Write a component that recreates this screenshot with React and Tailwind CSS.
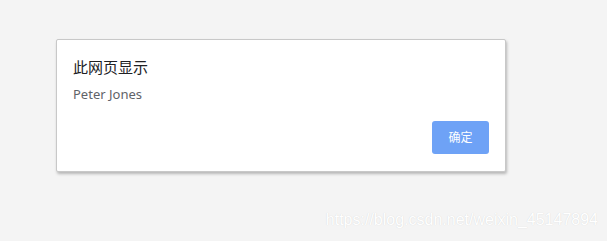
import React from "react";

const App = () => {
  return (
    <div
      className="w-[607px] h-[241px] bg-[#f4f4f4] overflow-hidden flex flex-col"
      style={{ fontFamily: '"Noto Sans", "Noto Sans CJK SC", sans-serif' }}
    >
      <div className="ml-[56px] mt-[39px] w-[450px] h-[133px] bg-white border border-[#c8c8c8] rounded-[2px] shadow-[1px_2px_3px_rgba(0,0,0,0.25)] flex flex-col px-[16px] pt-[16px]">
        <h1 className="text-[15px] leading-[22px] text-[#202124]">此网页显示</h1>
        <p className="mt-[6px] text-[13px] leading-[20px] text-[#5f6368]">Peter Jones</p>
        <div className="flex justify-end mt-[17px]">
          <button className="w-[57px] h-[33px] rounded-[3px] bg-[#6ea2f6] text-white text-[12px]">
            确定
          </button>
        </div>
      </div>
      <div className="flex justify-end pr-[9px] mt-[36px]">
        <span
          className="text-[16px] text-white"
          style={{ textShadow: "0 0 1px rgba(0,0,0,0.15)", fontFamily: '"Liberation Sans", sans-serif' }}
        >
          https://blog.csdn.net/weixin_45147894
        </span>
      </div>
    </div>
  );
};

export default App;
